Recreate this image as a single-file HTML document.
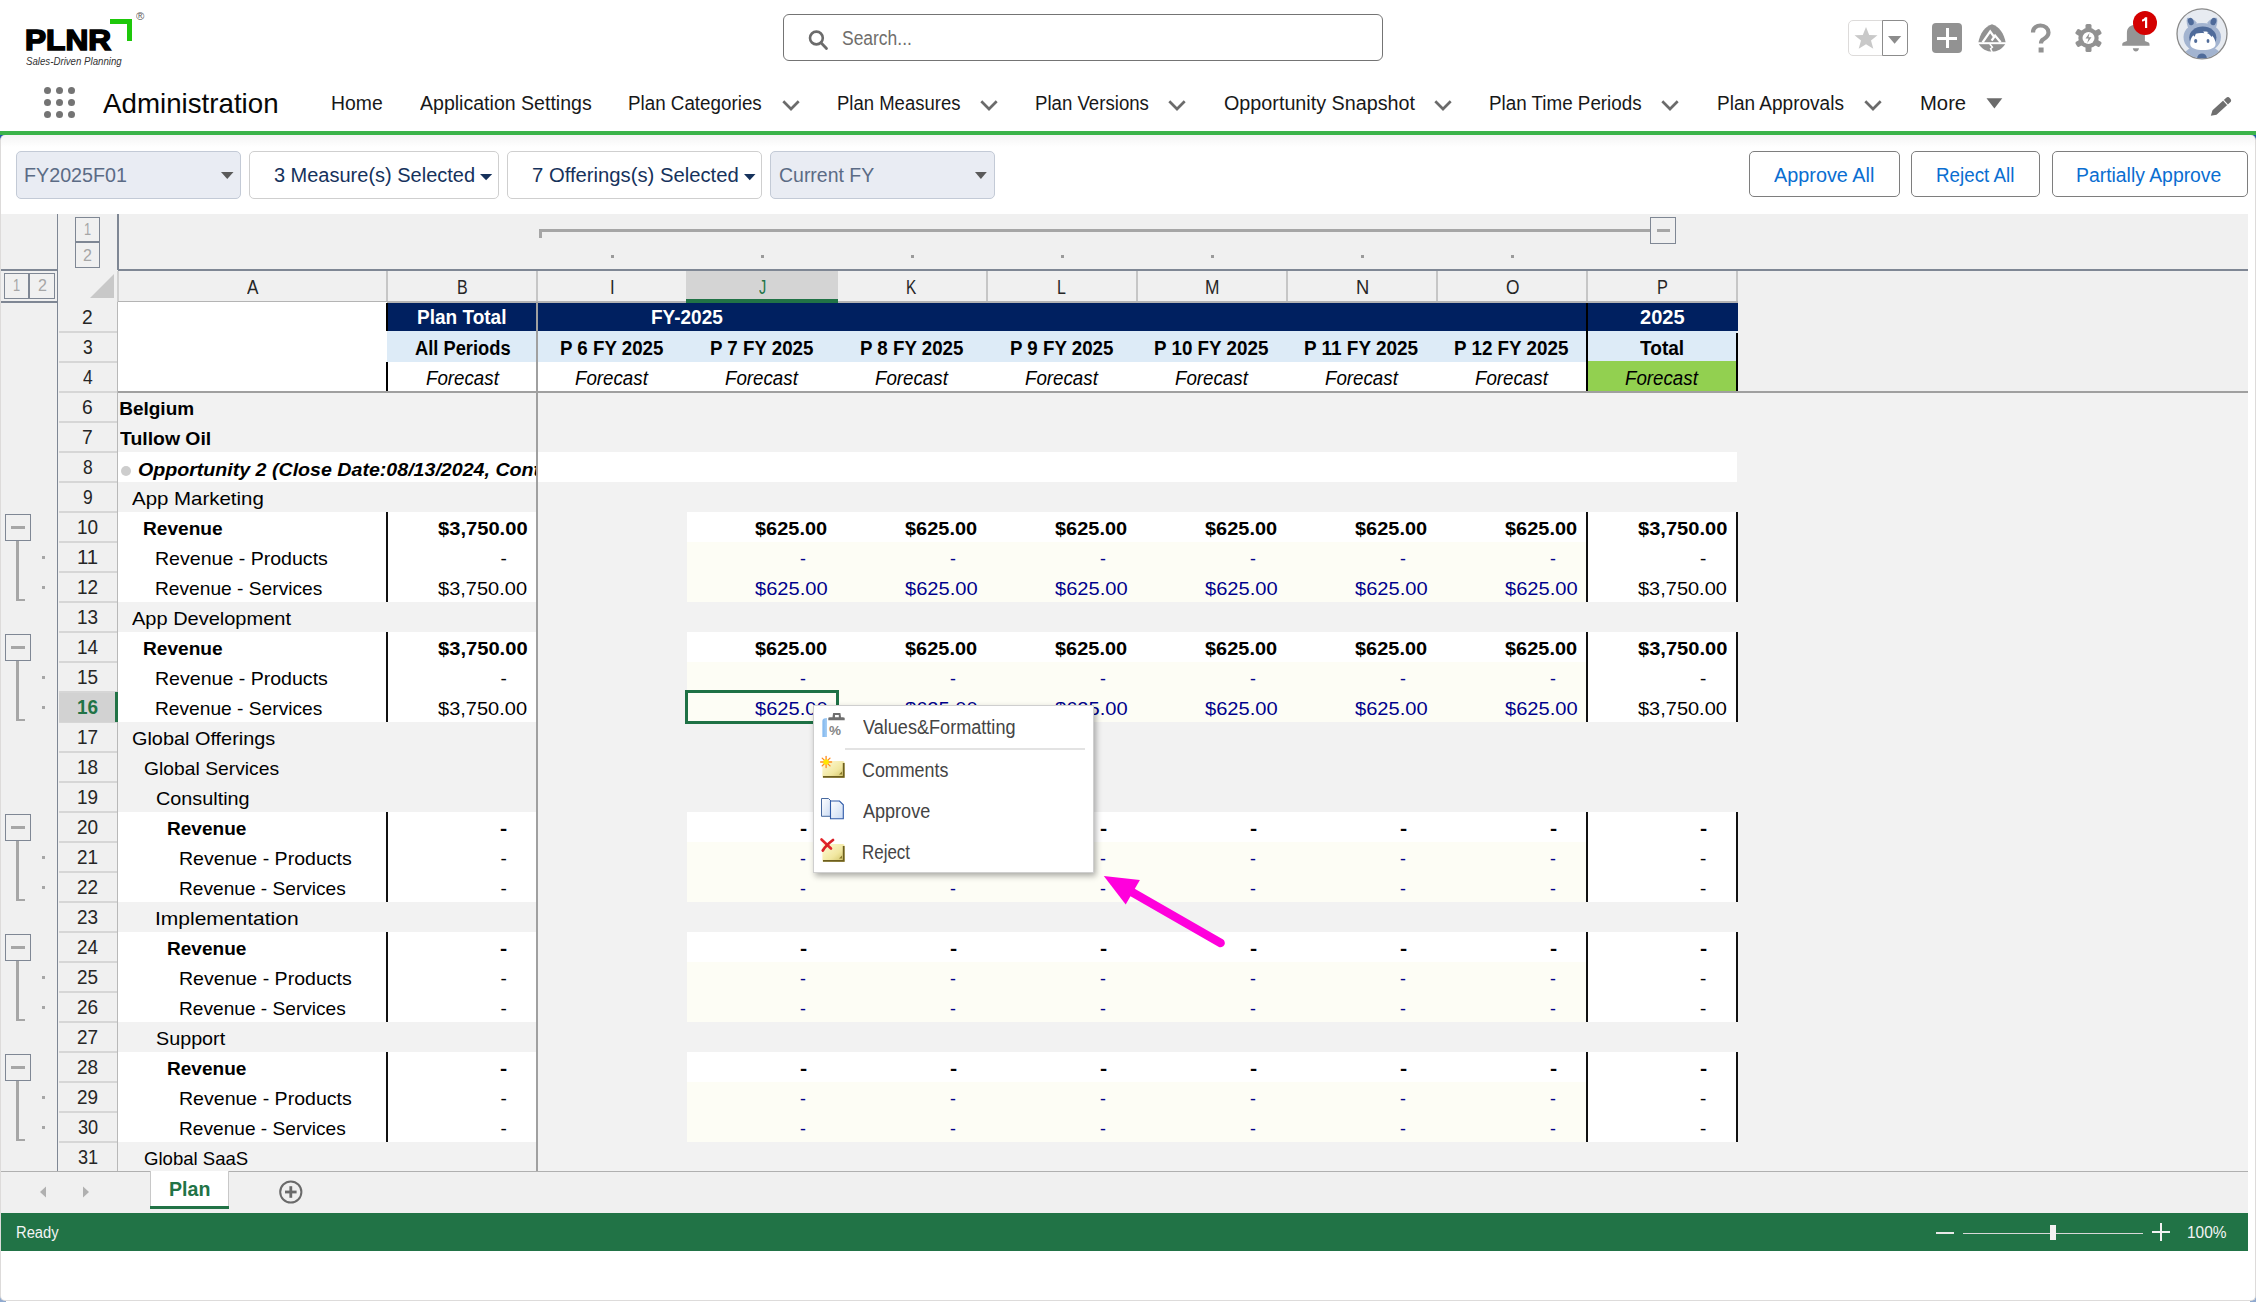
<!DOCTYPE html>
<html><head><meta charset="utf-8"><title>PLNR Administration</title>
<style>
html,body{margin:0;padding:0;width:2256px;height:1302px;overflow:hidden;background:#fff;font-family:"Liberation Sans",sans-serif;}
.t{position:absolute;white-space:nowrap;line-height:1;transform-origin:0 0;}
.r{position:absolute;}
svg{position:absolute;overflow:visible;}
</style></head><body>
<div class="t" style="left:24.69px;top:23px;font:normal 700 30px 'Liberation Sans', sans-serif;color:#000;transform:scaleX(1.0550);-webkit-text-stroke:1.6px #000;">PLNR</div>
<div class="r" style="left:110px;top:19px;width:22px;height:5px;background:#1ec80a;"></div>
<div class="r" style="left:127px;top:19px;width:5px;height:22px;background:#1ec80a;"></div>
<div class="t" style="left:135.90px;top:10px;font:normal 400 11px 'Liberation Sans', sans-serif;color:#5a5a5a;transform:scaleX(1.0250);">®</div>
<div class="t" style="left:26.00px;top:55px;font:italic 400 11px 'Liberation Sans', sans-serif;color:#333;transform:scaleX(0.8795);">Sales-Driven Planning</div>
<div class="r" style="left:783px;top:14px;width:598px;height:45px;border:1.4px solid #747474;border-radius:6px;background:#fff"></div>
<svg style="left:800px;top:22px" width="36" height="36"><circle cx="16.4" cy="16" r="6.4" fill="none" stroke="#6b6b6b" stroke-width="2.6"/><line x1="21" y1="20.8" x2="26.5" y2="26.5" stroke="#6b6b6b" stroke-width="2.8" stroke-linecap="round"/></svg>
<div class="t" style="left:841.50px;top:27px;font:normal 400 20px 'Liberation Sans', sans-serif;color:#706e6b;transform:scaleX(0.8728);">Search...</div>
<div class="r" style="left:1848px;top:20px;width:58px;height:34px;border:1px solid #dddbda;border-radius:5px;background:#fff"></div>
<div class="r" style="left:1882px;top:20px;width:24px;height:34px;border:1px solid #8c8c8c;border-left:1.5px solid #8c8c8c;border-radius:0 5px 5px 0;background:#fff"></div>
<svg style="left:1853px;top:26px" width="26" height="24"><polygon points="13,1 16.2,9 24.5,9.3 18,14.6 20.3,22.8 13,18.2 5.7,22.8 8,14.6 1.5,9.3 9.8,9" fill="#c9c9c9"/></svg>
<svg style="left:1888px;top:35px" width="15" height="10"><polygon points="0,1 13.2,1 6.6,8.8" fill="#8c8c8c"/></svg>
<div class="r" style="left:1932px;top:23px;width:30px;height:30px;border-radius:4px;background:#929292"></div>
<div class="r" style="left:1937px;top:36.5px;width:20px;height:3.0px;background:#fff;"></div>
<div class="r" style="left:1945.5px;top:28px;width:3.0px;height:20px;background:#fff;"></div>
<svg style="left:1977px;top:23px" width="30" height="30"><path d="M15 1.2 C 8 3.5, 3 10, 1.2 20 C 4.5 26.5, 10 28.6, 15 28.6 C 20 28.6, 25.5 26.5, 28.8 20 C 27 10, 22 3.5, 15 1.2 Z" fill="#929292"/><polyline points="5.6,19.3 13.2,8.4 17.6,14.6" fill="none" stroke="#fff" stroke-width="2.3" stroke-linejoin="miter"/><polyline points="14.6,17.6 18.1,12.6 23.6,19.3" fill="none" stroke="#fff" stroke-width="2.3"/><rect x="0" y="19.2" width="30" height="2" fill="#fff"/><path d="M12.8 21 L15.4 24.2 L13.6 25.8 L15.2 29" stroke="#fff" stroke-width="1.5" fill="none"/></svg>
<svg style="left:2028.5px;top:24px" width="24" height="30"><path d="M4 8.5 C 4 3.5, 8 1.5, 11.5 1.5 C 16 1.5, 19.5 4.5, 19.5 8.5 C 19.5 12.5, 16.5 14, 14 15.5 C 12.5 16.5, 12 17.5, 12 19.5" fill="none" stroke="#929292" stroke-width="4.2"/><rect x="9.6" y="23.5" width="5" height="5" fill="#929292"/></svg>
<svg style="left:2074px;top:23px" width="30" height="30"><g fill="#929292" transform="translate(14.5,15)"><rect x="-3" y="-14" width="6" height="6" rx="1.5" transform="rotate(0)"/><rect x="-3" y="-14" width="6" height="6" rx="1.5" transform="rotate(60)"/><rect x="-3" y="-14" width="6" height="6" rx="1.5" transform="rotate(120)"/><rect x="-3" y="-14" width="6" height="6" rx="1.5" transform="rotate(180)"/><rect x="-3" y="-14" width="6" height="6" rx="1.5" transform="rotate(240)"/><rect x="-3" y="-14" width="6" height="6" rx="1.5" transform="rotate(300)"/><circle r="10.2"/></g><circle cx="14.5" cy="15" r="6" fill="#fff"/><path d="M15.5 10 L11.5 15.6 L14.5 15.6 L13.2 20 L17.5 14.2 L14.5 14.2 Z" fill="#929292"/></svg>
<svg style="left:2120px;top:23px" width="34" height="32"><path d="M6.9 17.9 L6.9 10 C 6.9 4.5, 10.5 1.8, 15.9 1.8 C 21.3 1.8, 24.9 4.5, 24.9 10 L24.9 17.9 C 26 18.3, 27.6 18.8, 28.6 19.4 C 29.5 20, 29.6 21, 29.6 22.8 L2.2 22.8 C 2.2 21, 2.3 20, 3.2 19.4 C 4.2 18.8, 5.8 18.3, 6.9 17.9 Z" fill="#949494"/><path d="M12.8 25.2 L19 25.2 C 18.6 27.4, 17.4 28.5, 15.9 28.5 C 14.4 28.5, 13.2 27.4, 12.8 25.2 Z" fill="#949494"/></svg>
<svg style="left:2120px;top:0px" width="40" height="40"><circle cx="25" cy="23" r="12" fill="#d40000"/><path d="M25 17.2 L27.2 17.2 L27.2 28 L25 28 L25 20.4 C 24.2 20.9, 23 21.3, 22 21.4 L22 19.4 C 23.4 19.1, 24.4 18.3, 25 17.2 Z" fill="#fff"/></svg>
<svg style="left:2175px;top:8px" width="54" height="54"><defs><clipPath id="avc"><circle cx="27" cy="25.8" r="24.5"/></clipPath></defs><circle cx="27" cy="25.8" r="25" fill="#e7ebf1" stroke="#8a8a8a" stroke-width="1.3"/><g clip-path="url(#avc)"><path d="M10 44 L20 36 L34 36 L45 44 L45 56 L10 56 Z" fill="#a3b4d0"/><path d="M27 15 C 38 15, 46 21, 46 29 C 46 38, 38 44, 27 44 C 16 44, 8.5 38, 8.5 29 C 8.5 21, 16 15, 27 15 Z" fill="#a3b4d0"/><path d="M12 10 C 15 9, 19 11, 22 15 L14 22 C 12 18, 11 13, 12 10 Z" fill="#a3b4d0"/><path d="M42 10 C 39 9, 35 11, 32 15 L40 22 C 42 18, 43 13, 42 10 Z" fill="#a3b4d0"/><ellipse cx="15.8" cy="13.5" rx="2.8" ry="3.8" transform="rotate(-20 15.8 13.5)" fill="#4f6b9a"/><ellipse cx="38.5" cy="13.5" rx="2.8" ry="3.8" transform="rotate(20 38.5 13.5)" fill="#4f6b9a"/><ellipse cx="27.8" cy="29.6" rx="13.6" ry="11.2" fill="#4f6b9a"/><path d="M15.2 36 C 15 32, 16.3 29.5, 18.3 27.3 L19.6 28.8 L20.8 25.8 C 23 25, 26 24.6, 29.3 25.2 L28.2 23.6 C 30.5 23.2, 32.5 23.6, 33.6 24.2 L31.8 25 C 34 26, 35.8 27.5, 36.6 29.2 L37 27.6 C 38.6 29.2, 39.6 31, 40.2 33 L40.6 36 C 40.6 40, 35 42, 28 42 C 21 42, 15.2 40, 15.2 36 Z" fill="#fff"/><ellipse cx="20.7" cy="33" rx="1.6" ry="2.1" fill="#4f6b9a"/><ellipse cx="33" cy="33" rx="1.4" ry="2" fill="#4f6b9a"/><ellipse cx="27" cy="50" rx="4.8" ry="4.6" fill="#4f6b9a"/></g></svg>
<div class="r" style="left:44.0px;top:87.0px;width:7px;height:7px;border-radius:50%;background:#747474"></div>
<div class="r" style="left:44.0px;top:99.0px;width:7px;height:7px;border-radius:50%;background:#747474"></div>
<div class="r" style="left:44.0px;top:111.0px;width:7px;height:7px;border-radius:50%;background:#747474"></div>
<div class="r" style="left:56.0px;top:87.0px;width:7px;height:7px;border-radius:50%;background:#747474"></div>
<div class="r" style="left:56.0px;top:99.0px;width:7px;height:7px;border-radius:50%;background:#747474"></div>
<div class="r" style="left:56.0px;top:111.0px;width:7px;height:7px;border-radius:50%;background:#747474"></div>
<div class="r" style="left:68.0px;top:87.0px;width:7px;height:7px;border-radius:50%;background:#747474"></div>
<div class="r" style="left:68.0px;top:99.0px;width:7px;height:7px;border-radius:50%;background:#747474"></div>
<div class="r" style="left:68.0px;top:111.0px;width:7px;height:7px;border-radius:50%;background:#747474"></div>
<div class="t" style="left:102.50px;top:88px;font:normal 400 28px 'Liberation Sans', sans-serif;color:#080707;transform:scaleX(0.9896);">Administration</div>
<div class="t" style="left:331.43px;top:92px;font:normal 400 20px 'Liberation Sans', sans-serif;color:#181818;transform:scaleX(0.9689);">Home</div>
<div class="t" style="left:420.00px;top:92px;font:normal 400 20px 'Liberation Sans', sans-serif;color:#181818;transform:scaleX(0.9774);">Application Settings</div>
<div class="t" style="left:627.76px;top:92px;font:normal 400 20px 'Liberation Sans', sans-serif;color:#181818;transform:scaleX(0.9398);">Plan Categories</div>
<div class="t" style="left:836.57px;top:92px;font:normal 400 20px 'Liberation Sans', sans-serif;color:#181818;transform:scaleX(0.9252);">Plan Measures</div>
<div class="t" style="left:1035.07px;top:92px;font:normal 400 20px 'Liberation Sans', sans-serif;color:#181818;transform:scaleX(0.9316);">Plan Versions</div>
<div class="t" style="left:1224.00px;top:92px;font:normal 400 20px 'Liberation Sans', sans-serif;color:#181818;transform:scaleX(0.9876);">Opportunity Snapshot</div>
<div class="t" style="left:1489.06px;top:92px;font:normal 400 20px 'Liberation Sans', sans-serif;color:#181818;transform:scaleX(0.9403);">Plan Time Periods</div>
<div class="t" style="left:1717.05px;top:92px;font:normal 400 20px 'Liberation Sans', sans-serif;color:#181818;transform:scaleX(0.9512);">Plan Approvals</div>
<div class="t" style="left:1919.99px;top:92px;font:normal 400 20px 'Liberation Sans', sans-serif;color:#181818;transform:scaleX(1.0125);">More</div>
<svg style="left:781.6px;top:99px" width="20" height="14"><polyline points="1.3,2.3 9,10 16.7,2.3" fill="none" stroke="#6b6b6b" stroke-width="2.7"/></svg>
<svg style="left:980px;top:99px" width="20" height="14"><polyline points="1.3,2.3 9,10 16.7,2.3" fill="none" stroke="#6b6b6b" stroke-width="2.7"/></svg>
<svg style="left:1168px;top:99px" width="20" height="14"><polyline points="1.3,2.3 9,10 16.7,2.3" fill="none" stroke="#6b6b6b" stroke-width="2.7"/></svg>
<svg style="left:1434px;top:99px" width="20" height="14"><polyline points="1.3,2.3 9,10 16.7,2.3" fill="none" stroke="#6b6b6b" stroke-width="2.7"/></svg>
<svg style="left:1661px;top:99px" width="20" height="14"><polyline points="1.3,2.3 9,10 16.7,2.3" fill="none" stroke="#6b6b6b" stroke-width="2.7"/></svg>
<svg style="left:1864px;top:99px" width="20" height="14"><polyline points="1.3,2.3 9,10 16.7,2.3" fill="none" stroke="#6b6b6b" stroke-width="2.7"/></svg>
<svg style="left:1985px;top:97px" width="20" height="14"><polygon points="1.5,1.3 17.3,1.3 9.4,11.6" fill="#6b6b6b"/></svg>
<svg style="left:2200px;top:88px" width="40" height="34"><g transform="translate(10.8,27.8) rotate(-42)"><path d="M0 0 L5 -3 L23.5 -3 C 25.2 -3, 26 -2, 26 0 C 26 2, 25.2 3, 23.5 3 L5 3 Z" fill="#6f6f6f"/><rect x="19.2" y="-3.2" width="1.1" height="6.4" fill="#fff"/></g></svg>
<div class="r" style="left:0px;top:131px;width:2256px;height:4px;background:#3bb44a;"></div>
<div class="r" style="left:0px;top:135px;width:6px;height:6px;background:#1f5aa6;"></div>
<div class="r" style="left:2250px;top:135px;width:6px;height:6px;background:#1f5aa6;"></div>
<div class="r" style="left:0px;top:1296px;width:6px;height:6px;background:#8fa9cf;"></div>
<div class="r" style="left:2250px;top:1296px;width:6px;height:6px;background:#8fa9cf;"></div>
<div class="r" style="left:0px;top:135px;width:2254px;height:1165px;border:1px solid #dddbda;border-top:none;border-radius:5px 5px 5px 5px;background:linear-gradient(#f4f4f4, #fff 12px)"></div>
<div class="r" style="left:16px;top:151px;width:223px;height:46px;border:1.2px solid #c3cad6;border-radius:5px;background:#e9ecf3"></div>
<div class="t" style="left:23.91px;top:164px;font:normal 400 20px 'Liberation Sans', sans-serif;color:#5b6b85;transform:scaleX(0.9856);">FY2025F01</div>
<svg style="left:220.8px;top:171.6px" width="12.5" height="6.900000000000006"><polygon points="0,0 12.5,0 6.25,6.900000000000006" fill="#5a5a5a"/></svg>
<div class="r" style="left:249px;top:151px;width:248px;height:45.5px;border:1.2px solid #cfcfcf;border-radius:5px;background:#fff"></div>
<div class="t" style="left:273.90px;top:164px;font:normal 400 20px 'Liberation Sans', sans-serif;color:#16325c;">3 Measure(s) Selected</div>
<svg style="left:479.5px;top:174px" width="12.199999999999989" height="6.300000000000011"><polygon points="0,0 12.199999999999989,0 6.099999999999994,6.300000000000011" fill="#16325c"/></svg>
<div class="r" style="left:507px;top:151px;width:253px;height:45.5px;border:1.2px solid #cfcfcf;border-radius:5px;background:#fff"></div>
<div class="t" style="left:531.79px;top:164px;font:normal 400 20px 'Liberation Sans', sans-serif;color:#16325c;transform:scaleX(1.0126);">7 Offerings(s) Selected</div>
<svg style="left:744px;top:174px" width="11.5" height="6.300000000000011"><polygon points="0,0 11.5,0 5.75,6.300000000000011" fill="#16325c"/></svg>
<div class="r" style="left:770px;top:151px;width:223px;height:46px;border:1.2px solid #c3cad6;border-radius:5px;background:#e9ecf3"></div>
<div class="t" style="left:778.63px;top:164px;font:normal 400 20px 'Liberation Sans', sans-serif;color:#5b6b85;transform:scaleX(0.9734);">Current FY</div>
<svg style="left:974.7px;top:171.5px" width="11.799999999999955" height="6.900000000000006"><polygon points="0,0 11.799999999999955,0 5.899999999999977,6.900000000000006" fill="#5a5a5a"/></svg>
<div class="r" style="left:1749px;top:151px;width:149px;height:44px;border:1.3px solid #7e7e7e;border-radius:5px;background:#fff"></div>
<div class="t" style="left:1774.00px;top:164px;font:normal 400 20px 'Liberation Sans', sans-serif;color:#0a6ed1;transform:scaleX(0.9918);">Approve All</div>
<div class="r" style="left:1911px;top:151px;width:127px;height:44px;border:1.3px solid #7e7e7e;border-radius:5px;background:#fff"></div>
<div class="t" style="left:1936.06px;top:164px;font:normal 400 20px 'Liberation Sans', sans-serif;color:#0a6ed1;transform:scaleX(0.9394);">Reject All</div>
<div class="r" style="left:2052px;top:151px;width:194px;height:44px;border:1.3px solid #7e7e7e;border-radius:5px;background:#fff"></div>
<div class="t" style="left:2076.43px;top:164px;font:normal 400 20px 'Liberation Sans', sans-serif;color:#0a6ed1;transform:scaleX(0.9683);">Partially Approve</div>
<div class="r" style="left:1px;top:214px;width:2247px;height:958px;background:#f0f0f0;"></div>
<div class="r" style="left:118px;top:392px;width:2130px;height:780px;background:#f2f2f2;"></div>
<div class="r" style="left:56.8px;top:214px;width:1.5px;height:958px;background:#7f8794;"></div>
<div class="r" style="left:116.5px;top:214px;width:2.0px;height:56px;background:#7f8794;"></div>
<div class="r" style="left:1px;top:269px;width:56px;height:2px;background:#7f8794;"></div>
<div class="r" style="left:118px;top:269px;width:2130px;height:2px;background:#7f8794;"></div>
<div class="r" style="left:1px;top:300.5px;width:56px;height:2.0px;background:#7f8794;"></div>
<div class="r" style="left:75px;top:217px;width:25px;height:25px;border:1.6px solid #7f8794;box-sizing:border-box"></div>
<div class="r" style="left:75px;top:242px;width:25px;height:26px;border:1.6px solid #7f8794;box-sizing:border-box"></div>
<div class="t" style="left:83.55px;top:220px;font:normal 400 17px 'Liberation Sans', sans-serif;color:#a6a6a6;transform:scaleX(0.7500);">1</div>
<div class="t" style="left:83.05px;top:246px;font:normal 400 17px 'Liberation Sans', sans-serif;color:#a6a6a6;transform:scaleX(0.9444);">2</div>
<div class="r" style="left:4px;top:273px;width:25px;height:26px;border:1.6px solid #7f8794;box-sizing:border-box"></div>
<div class="r" style="left:29px;top:273px;width:26px;height:26px;border:1.6px solid #7f8794;box-sizing:border-box"></div>
<div class="t" style="left:12.55px;top:276px;font:normal 400 17px 'Liberation Sans', sans-serif;color:#a6a6a6;transform:scaleX(0.7500);">1</div>
<div class="t" style="left:37.95px;top:276px;font:normal 400 17px 'Liberation Sans', sans-serif;color:#a6a6a6;transform:scaleX(0.9444);">2</div>
<div class="r" style="left:539px;top:229px;width:1111px;height:3px;background:#a6a6a6;"></div>
<div class="r" style="left:539px;top:229px;width:3px;height:9px;background:#a6a6a6;"></div>
<div class="r" style="left:1650px;top:217px;width:26px;height:27px;border:1.6px solid #7f8794;box-sizing:border-box"></div>
<div class="r" style="left:1656.5px;top:229.3px;width:13.0px;height:2.3999999999999773px;background:#a6a6a6;"></div>
<div class="r" style="left:610.5px;top:254.5px;width:3.0px;height:3.0px;background:#9a9a9a;"></div>
<div class="r" style="left:760.5px;top:254.5px;width:3.0px;height:3.0px;background:#9a9a9a;"></div>
<div class="r" style="left:910.5px;top:254.5px;width:3.0px;height:3.0px;background:#9a9a9a;"></div>
<div class="r" style="left:1060.5px;top:254.5px;width:3.0px;height:3.0px;background:#9a9a9a;"></div>
<div class="r" style="left:1210.5px;top:254.5px;width:3.0px;height:3.0px;background:#9a9a9a;"></div>
<div class="r" style="left:1360.5px;top:254.5px;width:3.0px;height:3.0px;background:#9a9a9a;"></div>
<div class="r" style="left:1510.5px;top:254.5px;width:3.0px;height:3.0px;background:#9a9a9a;"></div>
<svg style="left:59px;top:271px" width="58" height="30"><polygon points="55,3 55,27 31,27" fill="#c8c8c8"/></svg>
<div class="r" style="left:117px;top:271px;width:2px;height:31px;background:#d0d0d0;"></div>
<div class="r" style="left:386px;top:271px;width:2px;height:30px;background:#c6c6c6;"></div>
<div class="r" style="left:536px;top:271px;width:2px;height:30px;background:#c6c6c6;"></div>
<div class="r" style="left:686px;top:271px;width:2px;height:30px;background:#c6c6c6;"></div>
<div class="r" style="left:836px;top:271px;width:2px;height:30px;background:#c6c6c6;"></div>
<div class="r" style="left:986px;top:271px;width:2px;height:30px;background:#c6c6c6;"></div>
<div class="r" style="left:1136px;top:271px;width:2px;height:30px;background:#c6c6c6;"></div>
<div class="r" style="left:1286px;top:271px;width:2px;height:30px;background:#c6c6c6;"></div>
<div class="r" style="left:1436px;top:271px;width:2px;height:30px;background:#c6c6c6;"></div>
<div class="r" style="left:1586px;top:271px;width:2px;height:30px;background:#c6c6c6;"></div>
<div class="r" style="left:1736px;top:271px;width:2px;height:30px;background:#c6c6c6;"></div>
<div class="r" style="left:686px;top:271px;width:152px;height:30px;background:#d4d4d4;"></div>
<div class="t" style="left:246.50px;top:276px;font:normal 400 20px 'Liberation Sans', sans-serif;color:#262626;transform:scaleX(0.8571);">A</div>
<div class="t" style="left:457.10px;top:276px;font:normal 400 20px 'Liberation Sans', sans-serif;color:#262626;transform:scaleX(0.8000);">B</div>
<div class="t" style="left:610.22px;top:276px;font:normal 400 20px 'Liberation Sans', sans-serif;color:#262626;transform:scaleX(0.8333);">I</div>
<div class="t" style="left:758.75px;top:276px;font:normal 400 20px 'Liberation Sans', sans-serif;color:#217346;transform:scaleX(0.7222);">J</div>
<div class="t" style="left:906.23px;top:276px;font:normal 400 20px 'Liberation Sans', sans-serif;color:#262626;transform:scaleX(0.7692);">K</div>
<div class="t" style="left:1057.20px;top:276px;font:normal 400 20px 'Liberation Sans', sans-serif;color:#262626;transform:scaleX(0.8000);">L</div>
<div class="t" style="left:1204.63px;top:276px;font:normal 400 20px 'Liberation Sans', sans-serif;color:#262626;transform:scaleX(0.8667);">M</div>
<div class="t" style="left:1355.58px;top:276px;font:normal 400 20px 'Liberation Sans', sans-serif;color:#262626;transform:scaleX(0.9167);">N</div>
<div class="t" style="left:1505.50px;top:276px;font:normal 400 20px 'Liberation Sans', sans-serif;color:#262626;transform:scaleX(0.8667);">O</div>
<div class="t" style="left:1656.68px;top:276px;font:normal 400 20px 'Liberation Sans', sans-serif;color:#262626;transform:scaleX(0.8167);">P</div>
<div class="r" style="left:118px;top:301px;width:1620px;height:2px;background:#b4b4b4;"></div>
<div class="r" style="left:686px;top:299px;width:152px;height:3.8000000000000114px;background:#217346;"></div>
<div class="r" style="left:59px;top:302px;width:58px;height:870px;background:#f0f0f0;"></div>
<div class="r" style="left:59px;top:331px;width:58px;height:2px;background:#d6d6d6;"></div>
<div class="r" style="left:59px;top:361px;width:58px;height:2px;background:#d6d6d6;"></div>
<div class="r" style="left:59px;top:391px;width:58px;height:2px;background:#d6d6d6;"></div>
<div class="r" style="left:59px;top:421px;width:58px;height:2px;background:#d6d6d6;"></div>
<div class="r" style="left:59px;top:451px;width:58px;height:2px;background:#d6d6d6;"></div>
<div class="r" style="left:59px;top:481px;width:58px;height:2px;background:#d6d6d6;"></div>
<div class="r" style="left:59px;top:511px;width:58px;height:2px;background:#d6d6d6;"></div>
<div class="r" style="left:59px;top:541px;width:58px;height:2px;background:#d6d6d6;"></div>
<div class="r" style="left:59px;top:571px;width:58px;height:2px;background:#d6d6d6;"></div>
<div class="r" style="left:59px;top:601px;width:58px;height:2px;background:#d6d6d6;"></div>
<div class="r" style="left:59px;top:631px;width:58px;height:2px;background:#d6d6d6;"></div>
<div class="r" style="left:59px;top:661px;width:58px;height:2px;background:#d6d6d6;"></div>
<div class="r" style="left:59px;top:691px;width:58px;height:2px;background:#d6d6d6;"></div>
<div class="r" style="left:59px;top:721px;width:58px;height:2px;background:#d6d6d6;"></div>
<div class="r" style="left:59px;top:751px;width:58px;height:2px;background:#d6d6d6;"></div>
<div class="r" style="left:59px;top:781px;width:58px;height:2px;background:#d6d6d6;"></div>
<div class="r" style="left:59px;top:811px;width:58px;height:2px;background:#d6d6d6;"></div>
<div class="r" style="left:59px;top:841px;width:58px;height:2px;background:#d6d6d6;"></div>
<div class="r" style="left:59px;top:871px;width:58px;height:2px;background:#d6d6d6;"></div>
<div class="r" style="left:59px;top:901px;width:58px;height:2px;background:#d6d6d6;"></div>
<div class="r" style="left:59px;top:931px;width:58px;height:2px;background:#d6d6d6;"></div>
<div class="r" style="left:59px;top:961px;width:58px;height:2px;background:#d6d6d6;"></div>
<div class="r" style="left:59px;top:991px;width:58px;height:2px;background:#d6d6d6;"></div>
<div class="r" style="left:59px;top:1021px;width:58px;height:2px;background:#d6d6d6;"></div>
<div class="r" style="left:59px;top:1051px;width:58px;height:2px;background:#d6d6d6;"></div>
<div class="r" style="left:59px;top:1081px;width:58px;height:2px;background:#d6d6d6;"></div>
<div class="r" style="left:59px;top:1111px;width:58px;height:2px;background:#d6d6d6;"></div>
<div class="r" style="left:59px;top:1141px;width:58px;height:2px;background:#d6d6d6;"></div>
<div class="r" style="left:59px;top:1171px;width:58px;height:2px;background:#d6d6d6;"></div>
<div class="r" style="left:117px;top:302px;width:1px;height:870px;background:#b8b8b8;"></div>
<div class="r" style="left:59px;top:693px;width:58px;height:29px;background:#d2d2d2;"></div>
<div class="r" style="left:114.5px;top:692px;width:3.0px;height:30px;background:#217346;"></div>
<div class="t" style="left:81.94px;top:306px;font:normal 400 20px 'Liberation Sans', sans-serif;color:#262626;transform:scaleX(0.9600);">2</div>
<div class="t" style="left:82.90px;top:336px;font:normal 400 20px 'Liberation Sans', sans-serif;color:#262626;transform:scaleX(0.8727);">3</div>
<div class="t" style="left:82.90px;top:366px;font:normal 400 20px 'Liberation Sans', sans-serif;color:#262626;transform:scaleX(0.8727);">4</div>
<div class="t" style="left:81.94px;top:396px;font:normal 400 20px 'Liberation Sans', sans-serif;color:#262626;transform:scaleX(0.9600);">6</div>
<div class="t" style="left:81.94px;top:426px;font:normal 400 20px 'Liberation Sans', sans-serif;color:#262626;transform:scaleX(0.9600);">7</div>
<div class="t" style="left:82.90px;top:456px;font:normal 400 20px 'Liberation Sans', sans-serif;color:#262626;transform:scaleX(0.8727);">8</div>
<div class="t" style="left:82.90px;top:486px;font:normal 400 20px 'Liberation Sans', sans-serif;color:#262626;transform:scaleX(0.8727);">9</div>
<div class="t" style="left:76.75px;top:516px;font:normal 400 20px 'Liberation Sans', sans-serif;color:#262626;transform:scaleX(0.9468);">10</div>
<div class="t" style="left:76.68px;top:546px;font:normal 400 20px 'Liberation Sans', sans-serif;color:#262626;transform:scaleX(1.0184);">11</div>
<div class="t" style="left:76.75px;top:576px;font:normal 400 20px 'Liberation Sans', sans-serif;color:#262626;transform:scaleX(0.9468);">12</div>
<div class="t" style="left:76.75px;top:606px;font:normal 400 20px 'Liberation Sans', sans-serif;color:#262626;transform:scaleX(0.9468);">13</div>
<div class="t" style="left:76.75px;top:636px;font:normal 400 20px 'Liberation Sans', sans-serif;color:#262626;transform:scaleX(0.9468);">14</div>
<div class="t" style="left:76.75px;top:666px;font:normal 400 20px 'Liberation Sans', sans-serif;color:#262626;transform:scaleX(0.9468);">15</div>
<div class="t" style="left:76.75px;top:696px;font:normal 700 20px 'Liberation Sans', sans-serif;color:#217346;transform:scaleX(0.9468);">16</div>
<div class="t" style="left:76.75px;top:726px;font:normal 400 20px 'Liberation Sans', sans-serif;color:#262626;transform:scaleX(0.9468);">17</div>
<div class="t" style="left:76.75px;top:756px;font:normal 400 20px 'Liberation Sans', sans-serif;color:#262626;transform:scaleX(0.9468);">18</div>
<div class="t" style="left:76.75px;top:786px;font:normal 400 20px 'Liberation Sans', sans-serif;color:#262626;transform:scaleX(0.9468);">19</div>
<div class="t" style="left:76.75px;top:816px;font:normal 400 20px 'Liberation Sans', sans-serif;color:#262626;transform:scaleX(0.9468);">20</div>
<div class="t" style="left:76.75px;top:846px;font:normal 400 20px 'Liberation Sans', sans-serif;color:#262626;transform:scaleX(0.9468);">21</div>
<div class="t" style="left:76.75px;top:876px;font:normal 400 20px 'Liberation Sans', sans-serif;color:#262626;transform:scaleX(0.9468);">22</div>
<div class="t" style="left:76.75px;top:906px;font:normal 400 20px 'Liberation Sans', sans-serif;color:#262626;transform:scaleX(0.9468);">23</div>
<div class="t" style="left:76.75px;top:936px;font:normal 400 20px 'Liberation Sans', sans-serif;color:#262626;transform:scaleX(0.9468);">24</div>
<div class="t" style="left:76.75px;top:966px;font:normal 400 20px 'Liberation Sans', sans-serif;color:#262626;transform:scaleX(0.9468);">25</div>
<div class="t" style="left:76.75px;top:996px;font:normal 400 20px 'Liberation Sans', sans-serif;color:#262626;transform:scaleX(0.9468);">26</div>
<div class="t" style="left:76.75px;top:1026px;font:normal 400 20px 'Liberation Sans', sans-serif;color:#262626;transform:scaleX(0.9468);">27</div>
<div class="t" style="left:76.75px;top:1056px;font:normal 400 20px 'Liberation Sans', sans-serif;color:#262626;transform:scaleX(0.9468);">28</div>
<div class="t" style="left:76.75px;top:1086px;font:normal 400 20px 'Liberation Sans', sans-serif;color:#262626;transform:scaleX(0.9468);">29</div>
<div class="t" style="left:77.70px;top:1116px;font:normal 400 20px 'Liberation Sans', sans-serif;color:#262626;transform:scaleX(0.9040);">30</div>
<div class="t" style="left:77.70px;top:1146px;font:normal 400 20px 'Liberation Sans', sans-serif;color:#262626;transform:scaleX(0.9040);">31</div>
<div class="r" style="left:387px;top:303px;width:1351px;height:28px;background:#002060;"></div>
<div class="r" style="left:387px;top:331px;width:1200px;height:31px;background:#ddebf7;"></div>
<div class="r" style="left:1587px;top:331px;width:150px;height:30px;background:#ddebf7;"></div>
<div class="r" style="left:118px;top:302px;width:269px;height:90px;background:#fff;"></div>
<div class="r" style="left:387px;top:362px;width:1200px;height:30px;background:#fff;"></div>
<div class="r" style="left:1587px;top:361px;width:150px;height:31px;background:#92d050;"></div>
<div class="r" style="left:386.4px;top:303px;width:1.6000000000000227px;height:28px;background:#000;"></div>
<div class="r" style="left:386.4px;top:362px;width:1.6000000000000227px;height:29px;background:#000;"></div>
<div class="r" style="left:1586.4px;top:303px;width:1.599999999999909px;height:88px;background:#000;"></div>
<div class="r" style="left:1736.4px;top:333px;width:1.599999999999909px;height:58px;background:#000;"></div>
<div class="t" style="left:417.05px;top:306px;font:normal 700 20px 'Liberation Sans', sans-serif;color:#fff;transform:scaleX(0.9511);">Plan Total</div>
<div class="t" style="left:650.85px;top:306px;font:normal 700 20px 'Liberation Sans', sans-serif;color:#fff;transform:scaleX(0.9492);">FY-2025</div>
<div class="t" style="left:1640.00px;top:306px;font:normal 700 20px 'Liberation Sans', sans-serif;color:#fff;transform:scaleX(1.0029);">2025</div>
<div class="t" style="left:414.50px;top:337px;font:normal 700 20px 'Liberation Sans', sans-serif;color:#000;transform:scaleX(0.9152);">All Periods</div>
<div class="t" style="left:559.56px;top:337px;font:normal 700 20px 'Liberation Sans', sans-serif;color:#000;transform:scaleX(0.9359);">P 6 FY 2025</div>
<div class="t" style="left:709.56px;top:337px;font:normal 700 20px 'Liberation Sans', sans-serif;color:#000;transform:scaleX(0.9359);">P 7 FY 2025</div>
<div class="t" style="left:859.56px;top:337px;font:normal 700 20px 'Liberation Sans', sans-serif;color:#000;transform:scaleX(0.9359);">P 8 FY 2025</div>
<div class="t" style="left:1009.56px;top:337px;font:normal 700 20px 'Liberation Sans', sans-serif;color:#000;transform:scaleX(0.9359);">P 9 FY 2025</div>
<div class="t" style="left:1154.06px;top:337px;font:normal 700 20px 'Liberation Sans', sans-serif;color:#000;transform:scaleX(0.9407);">P 10 FY 2025</div>
<div class="t" style="left:1304.20px;top:337px;font:normal 700 20px 'Liberation Sans', sans-serif;color:#000;transform:scaleX(0.9469);">P 11 FY 2025</div>
<div class="t" style="left:1454.06px;top:337px;font:normal 700 20px 'Liberation Sans', sans-serif;color:#000;transform:scaleX(0.9407);">P 12 FY 2025</div>
<div class="t" style="left:1640.00px;top:337px;font:normal 700 20px 'Liberation Sans', sans-serif;color:#000;transform:scaleX(0.9534);">Total</div>
<div class="t" style="left:425.70px;top:367px;font:italic 400 20px 'Liberation Sans', sans-serif;color:#000;transform:scaleX(0.9363);">Forecast</div>
<div class="t" style="left:575.40px;top:367px;font:italic 400 20px 'Liberation Sans', sans-serif;color:#000;transform:scaleX(0.9363);">Forecast</div>
<div class="t" style="left:725.40px;top:367px;font:italic 400 20px 'Liberation Sans', sans-serif;color:#000;transform:scaleX(0.9363);">Forecast</div>
<div class="t" style="left:875.40px;top:367px;font:italic 400 20px 'Liberation Sans', sans-serif;color:#000;transform:scaleX(0.9363);">Forecast</div>
<div class="t" style="left:1025.40px;top:367px;font:italic 400 20px 'Liberation Sans', sans-serif;color:#000;transform:scaleX(0.9363);">Forecast</div>
<div class="t" style="left:1175.40px;top:367px;font:italic 400 20px 'Liberation Sans', sans-serif;color:#000;transform:scaleX(0.9363);">Forecast</div>
<div class="t" style="left:1325.40px;top:367px;font:italic 400 20px 'Liberation Sans', sans-serif;color:#000;transform:scaleX(0.9363);">Forecast</div>
<div class="t" style="left:1475.40px;top:367px;font:italic 400 20px 'Liberation Sans', sans-serif;color:#000;transform:scaleX(0.9363);">Forecast</div>
<div class="t" style="left:1625.40px;top:367px;font:italic 400 20px 'Liberation Sans', sans-serif;color:#000;transform:scaleX(0.9363);">Forecast</div>
<div class="r" style="left:118px;top:512px;width:419px;height:30px;background:#fff;"></div>
<div class="r" style="left:687px;top:512px;width:900px;height:30px;background:#fff;"></div>
<div class="r" style="left:1587px;top:512px;width:150px;height:30px;background:#fff;"></div>
<div class="r" style="left:386.4px;top:512px;width:1.6000000000000227px;height:30px;background:#111;"></div>
<div class="r" style="left:1586.4px;top:512px;width:1.599999999999909px;height:30px;background:#111;"></div>
<div class="r" style="left:1736.4px;top:512px;width:1.599999999999909px;height:30px;background:#111;"></div>
<div class="r" style="left:118px;top:632px;width:419px;height:30px;background:#fff;"></div>
<div class="r" style="left:687px;top:632px;width:900px;height:30px;background:#fff;"></div>
<div class="r" style="left:1587px;top:632px;width:150px;height:30px;background:#fff;"></div>
<div class="r" style="left:386.4px;top:632px;width:1.6000000000000227px;height:30px;background:#111;"></div>
<div class="r" style="left:1586.4px;top:632px;width:1.599999999999909px;height:30px;background:#111;"></div>
<div class="r" style="left:1736.4px;top:632px;width:1.599999999999909px;height:30px;background:#111;"></div>
<div class="r" style="left:118px;top:812px;width:419px;height:30px;background:#fff;"></div>
<div class="r" style="left:687px;top:812px;width:900px;height:30px;background:#fff;"></div>
<div class="r" style="left:1587px;top:812px;width:150px;height:30px;background:#fff;"></div>
<div class="r" style="left:386.4px;top:812px;width:1.6000000000000227px;height:30px;background:#111;"></div>
<div class="r" style="left:1586.4px;top:812px;width:1.599999999999909px;height:30px;background:#111;"></div>
<div class="r" style="left:1736.4px;top:812px;width:1.599999999999909px;height:30px;background:#111;"></div>
<div class="r" style="left:118px;top:932px;width:419px;height:30px;background:#fff;"></div>
<div class="r" style="left:687px;top:932px;width:900px;height:30px;background:#fff;"></div>
<div class="r" style="left:1587px;top:932px;width:150px;height:30px;background:#fff;"></div>
<div class="r" style="left:386.4px;top:932px;width:1.6000000000000227px;height:30px;background:#111;"></div>
<div class="r" style="left:1586.4px;top:932px;width:1.599999999999909px;height:30px;background:#111;"></div>
<div class="r" style="left:1736.4px;top:932px;width:1.599999999999909px;height:30px;background:#111;"></div>
<div class="r" style="left:118px;top:1052px;width:419px;height:30px;background:#fff;"></div>
<div class="r" style="left:687px;top:1052px;width:900px;height:30px;background:#fff;"></div>
<div class="r" style="left:1587px;top:1052px;width:150px;height:30px;background:#fff;"></div>
<div class="r" style="left:386.4px;top:1052px;width:1.6000000000000227px;height:30px;background:#111;"></div>
<div class="r" style="left:1586.4px;top:1052px;width:1.599999999999909px;height:30px;background:#111;"></div>
<div class="r" style="left:1736.4px;top:1052px;width:1.599999999999909px;height:30px;background:#111;"></div>
<div class="r" style="left:118px;top:542px;width:419px;height:30px;background:#fff;"></div>
<div class="r" style="left:687px;top:542px;width:900px;height:30px;background:#fdfdf5;"></div>
<div class="r" style="left:1587px;top:542px;width:150px;height:30px;background:#fff;"></div>
<div class="r" style="left:386.4px;top:542px;width:1.6000000000000227px;height:30px;background:#111;"></div>
<div class="r" style="left:1586.4px;top:542px;width:1.599999999999909px;height:30px;background:#111;"></div>
<div class="r" style="left:1736.4px;top:542px;width:1.599999999999909px;height:30px;background:#111;"></div>
<div class="r" style="left:118px;top:572px;width:419px;height:30px;background:#fff;"></div>
<div class="r" style="left:687px;top:572px;width:900px;height:30px;background:#fdfdf5;"></div>
<div class="r" style="left:1587px;top:572px;width:150px;height:30px;background:#fff;"></div>
<div class="r" style="left:386.4px;top:572px;width:1.6000000000000227px;height:30px;background:#111;"></div>
<div class="r" style="left:1586.4px;top:572px;width:1.599999999999909px;height:30px;background:#111;"></div>
<div class="r" style="left:1736.4px;top:572px;width:1.599999999999909px;height:30px;background:#111;"></div>
<div class="r" style="left:118px;top:662px;width:419px;height:30px;background:#fff;"></div>
<div class="r" style="left:687px;top:662px;width:900px;height:30px;background:#fdfdf5;"></div>
<div class="r" style="left:1587px;top:662px;width:150px;height:30px;background:#fff;"></div>
<div class="r" style="left:386.4px;top:662px;width:1.6000000000000227px;height:30px;background:#111;"></div>
<div class="r" style="left:1586.4px;top:662px;width:1.599999999999909px;height:30px;background:#111;"></div>
<div class="r" style="left:1736.4px;top:662px;width:1.599999999999909px;height:30px;background:#111;"></div>
<div class="r" style="left:118px;top:692px;width:419px;height:30px;background:#fff;"></div>
<div class="r" style="left:687px;top:692px;width:900px;height:30px;background:#fdfdf5;"></div>
<div class="r" style="left:1587px;top:692px;width:150px;height:30px;background:#fff;"></div>
<div class="r" style="left:386.4px;top:692px;width:1.6000000000000227px;height:30px;background:#111;"></div>
<div class="r" style="left:1586.4px;top:692px;width:1.599999999999909px;height:30px;background:#111;"></div>
<div class="r" style="left:1736.4px;top:692px;width:1.599999999999909px;height:30px;background:#111;"></div>
<div class="r" style="left:118px;top:842px;width:419px;height:30px;background:#fff;"></div>
<div class="r" style="left:687px;top:842px;width:900px;height:30px;background:#fdfdf5;"></div>
<div class="r" style="left:1587px;top:842px;width:150px;height:30px;background:#fff;"></div>
<div class="r" style="left:386.4px;top:842px;width:1.6000000000000227px;height:30px;background:#111;"></div>
<div class="r" style="left:1586.4px;top:842px;width:1.599999999999909px;height:30px;background:#111;"></div>
<div class="r" style="left:1736.4px;top:842px;width:1.599999999999909px;height:30px;background:#111;"></div>
<div class="r" style="left:118px;top:872px;width:419px;height:30px;background:#fff;"></div>
<div class="r" style="left:687px;top:872px;width:900px;height:30px;background:#fdfdf5;"></div>
<div class="r" style="left:1587px;top:872px;width:150px;height:30px;background:#fff;"></div>
<div class="r" style="left:386.4px;top:872px;width:1.6000000000000227px;height:30px;background:#111;"></div>
<div class="r" style="left:1586.4px;top:872px;width:1.599999999999909px;height:30px;background:#111;"></div>
<div class="r" style="left:1736.4px;top:872px;width:1.599999999999909px;height:30px;background:#111;"></div>
<div class="r" style="left:118px;top:962px;width:419px;height:30px;background:#fff;"></div>
<div class="r" style="left:687px;top:962px;width:900px;height:30px;background:#fdfdf5;"></div>
<div class="r" style="left:1587px;top:962px;width:150px;height:30px;background:#fff;"></div>
<div class="r" style="left:386.4px;top:962px;width:1.6000000000000227px;height:30px;background:#111;"></div>
<div class="r" style="left:1586.4px;top:962px;width:1.599999999999909px;height:30px;background:#111;"></div>
<div class="r" style="left:1736.4px;top:962px;width:1.599999999999909px;height:30px;background:#111;"></div>
<div class="r" style="left:118px;top:992px;width:419px;height:30px;background:#fff;"></div>
<div class="r" style="left:687px;top:992px;width:900px;height:30px;background:#fdfdf5;"></div>
<div class="r" style="left:1587px;top:992px;width:150px;height:30px;background:#fff;"></div>
<div class="r" style="left:386.4px;top:992px;width:1.6000000000000227px;height:30px;background:#111;"></div>
<div class="r" style="left:1586.4px;top:992px;width:1.599999999999909px;height:30px;background:#111;"></div>
<div class="r" style="left:1736.4px;top:992px;width:1.599999999999909px;height:30px;background:#111;"></div>
<div class="r" style="left:118px;top:1082px;width:419px;height:30px;background:#fff;"></div>
<div class="r" style="left:687px;top:1082px;width:900px;height:30px;background:#fdfdf5;"></div>
<div class="r" style="left:1587px;top:1082px;width:150px;height:30px;background:#fff;"></div>
<div class="r" style="left:386.4px;top:1082px;width:1.6000000000000227px;height:30px;background:#111;"></div>
<div class="r" style="left:1586.4px;top:1082px;width:1.599999999999909px;height:30px;background:#111;"></div>
<div class="r" style="left:1736.4px;top:1082px;width:1.599999999999909px;height:30px;background:#111;"></div>
<div class="r" style="left:118px;top:1112px;width:419px;height:30px;background:#fff;"></div>
<div class="r" style="left:687px;top:1112px;width:900px;height:30px;background:#fdfdf5;"></div>
<div class="r" style="left:1587px;top:1112px;width:150px;height:30px;background:#fff;"></div>
<div class="r" style="left:386.4px;top:1112px;width:1.6000000000000227px;height:30px;background:#111;"></div>
<div class="r" style="left:1586.4px;top:1112px;width:1.599999999999909px;height:30px;background:#111;"></div>
<div class="r" style="left:1736.4px;top:1112px;width:1.599999999999909px;height:30px;background:#111;"></div>
<div class="r" style="left:118px;top:452px;width:1619px;height:30px;background:#fff;"></div>
<div class="r" style="left:536px;top:302px;width:2px;height:870px;background:#a0a0a0;"></div>
<div class="r" style="left:118px;top:390.5px;width:2130px;height:2.0px;background:#a0a0a0;"></div>
<div class="t" style="left:119.20px;top:398px;font:normal 700 19px 'Liberation Sans', sans-serif;color:#000;">Belgium</div>
<div class="t" style="left:119.80px;top:428px;font:normal 700 19px 'Liberation Sans', sans-serif;color:#000;transform:scaleX(1.0207);">Tullow Oil</div>
<div class="t" style="left:131.90px;top:488px;font:normal 400 19px 'Liberation Sans', sans-serif;color:#000;transform:scaleX(1.0759);">App Marketing</div>
<div class="t" style="left:142.69px;top:518px;font:normal 700 19px 'Liberation Sans', sans-serif;color:#000;transform:scaleX(1.0060);">Revenue</div>
<div class="t" style="left:154.97px;top:548px;font:normal 400 19px 'Liberation Sans', sans-serif;color:#000;transform:scaleX(1.0293);">Revenue - Products</div>
<div class="t" style="left:154.99px;top:578px;font:normal 400 19px 'Liberation Sans', sans-serif;color:#000;transform:scaleX(1.0092);">Revenue - Services</div>
<div class="t" style="left:132.00px;top:608px;font:normal 400 19px 'Liberation Sans', sans-serif;color:#000;transform:scaleX(1.0523);">App Development</div>
<div class="t" style="left:142.69px;top:638px;font:normal 700 19px 'Liberation Sans', sans-serif;color:#000;transform:scaleX(1.0060);">Revenue</div>
<div class="t" style="left:154.97px;top:668px;font:normal 400 19px 'Liberation Sans', sans-serif;color:#000;transform:scaleX(1.0293);">Revenue - Products</div>
<div class="t" style="left:154.99px;top:698px;font:normal 400 19px 'Liberation Sans', sans-serif;color:#000;transform:scaleX(1.0092);">Revenue - Services</div>
<div class="t" style="left:131.90px;top:728px;font:normal 400 19px 'Liberation Sans', sans-serif;color:#000;transform:scaleX(1.0459);">Global Offerings</div>
<div class="t" style="left:143.70px;top:758px;font:normal 400 19px 'Liberation Sans', sans-serif;color:#000;transform:scaleX(1.0154);">Global Services</div>
<div class="t" style="left:156.00px;top:788px;font:normal 400 19px 'Liberation Sans', sans-serif;color:#000;transform:scaleX(1.0425);">Consulting</div>
<div class="t" style="left:166.90px;top:818px;font:normal 700 19px 'Liberation Sans', sans-serif;color:#000;transform:scaleX(1.0021);">Revenue</div>
<div class="t" style="left:178.97px;top:848px;font:normal 400 19px 'Liberation Sans', sans-serif;color:#000;transform:scaleX(1.0287);">Revenue - Products</div>
<div class="t" style="left:178.99px;top:878px;font:normal 400 19px 'Liberation Sans', sans-serif;color:#000;transform:scaleX(1.0061);">Revenue - Services</div>
<div class="t" style="left:154.89px;top:908px;font:normal 400 19px 'Liberation Sans', sans-serif;color:#000;transform:scaleX(1.1057);">Implementation</div>
<div class="t" style="left:166.90px;top:938px;font:normal 700 19px 'Liberation Sans', sans-serif;color:#000;transform:scaleX(1.0021);">Revenue</div>
<div class="t" style="left:178.97px;top:968px;font:normal 400 19px 'Liberation Sans', sans-serif;color:#000;transform:scaleX(1.0287);">Revenue - Products</div>
<div class="t" style="left:178.99px;top:998px;font:normal 400 19px 'Liberation Sans', sans-serif;color:#000;transform:scaleX(1.0061);">Revenue - Services</div>
<div class="t" style="left:156.00px;top:1028px;font:normal 400 19px 'Liberation Sans', sans-serif;color:#000;transform:scaleX(1.0391);">Support</div>
<div class="t" style="left:166.90px;top:1058px;font:normal 700 19px 'Liberation Sans', sans-serif;color:#000;transform:scaleX(1.0021);">Revenue</div>
<div class="t" style="left:178.97px;top:1088px;font:normal 400 19px 'Liberation Sans', sans-serif;color:#000;transform:scaleX(1.0287);">Revenue - Products</div>
<div class="t" style="left:178.99px;top:1118px;font:normal 400 19px 'Liberation Sans', sans-serif;color:#000;transform:scaleX(1.0061);">Revenue - Services</div>
<div class="t" style="left:143.70px;top:1148px;font:normal 400 19px 'Liberation Sans', sans-serif;color:#000;transform:scaleX(0.9773);">Global SaaS</div>
<div class="r" style="left:121px;top:465.6px;width:10px;height:10px;border-radius:50%;background:#cdcdcd"></div>
<div style="position:absolute;left:118px;top:452px;width:418px;height:30px;overflow:hidden"><div style="position:absolute;left:-118px;top:-452px"><div class="t" style="left:138.30px;top:459px;font:italic 700 19px 'Liberation Sans', sans-serif;color:#000;transform:scaleX(1.0319);">Opportunity 2 (Close Date:08/13/2024, Cont</div></div></div>
<div class="t" style="left:437.50px;top:518px;font:normal 700 19px 'Liberation Sans', sans-serif;color:#000;transform:scaleX(1.0600);">$3,750.00</div>
<div class="t" style="left:754.90px;top:518px;font:normal 700 19px 'Liberation Sans', sans-serif;color:#000;transform:scaleX(1.0512);">$625.00</div>
<div class="t" style="left:904.90px;top:518px;font:normal 700 19px 'Liberation Sans', sans-serif;color:#000;transform:scaleX(1.0512);">$625.00</div>
<div class="t" style="left:1054.90px;top:518px;font:normal 700 19px 'Liberation Sans', sans-serif;color:#000;transform:scaleX(1.0512);">$625.00</div>
<div class="t" style="left:1204.90px;top:518px;font:normal 700 19px 'Liberation Sans', sans-serif;color:#000;transform:scaleX(1.0512);">$625.00</div>
<div class="t" style="left:1354.90px;top:518px;font:normal 700 19px 'Liberation Sans', sans-serif;color:#000;transform:scaleX(1.0512);">$625.00</div>
<div class="t" style="left:1504.90px;top:518px;font:normal 700 19px 'Liberation Sans', sans-serif;color:#000;transform:scaleX(1.0512);">$625.00</div>
<div class="t" style="left:1637.60px;top:518px;font:normal 700 19px 'Liberation Sans', sans-serif;color:#000;transform:scaleX(1.0565);">$3,750.00</div>
<div class="t" style="left:437.50px;top:638px;font:normal 700 19px 'Liberation Sans', sans-serif;color:#000;transform:scaleX(1.0600);">$3,750.00</div>
<div class="t" style="left:754.90px;top:638px;font:normal 700 19px 'Liberation Sans', sans-serif;color:#000;transform:scaleX(1.0512);">$625.00</div>
<div class="t" style="left:904.90px;top:638px;font:normal 700 19px 'Liberation Sans', sans-serif;color:#000;transform:scaleX(1.0512);">$625.00</div>
<div class="t" style="left:1054.90px;top:638px;font:normal 700 19px 'Liberation Sans', sans-serif;color:#000;transform:scaleX(1.0512);">$625.00</div>
<div class="t" style="left:1204.90px;top:638px;font:normal 700 19px 'Liberation Sans', sans-serif;color:#000;transform:scaleX(1.0512);">$625.00</div>
<div class="t" style="left:1354.90px;top:638px;font:normal 700 19px 'Liberation Sans', sans-serif;color:#000;transform:scaleX(1.0512);">$625.00</div>
<div class="t" style="left:1504.90px;top:638px;font:normal 700 19px 'Liberation Sans', sans-serif;color:#000;transform:scaleX(1.0512);">$625.00</div>
<div class="t" style="left:1637.60px;top:638px;font:normal 700 19px 'Liberation Sans', sans-serif;color:#000;transform:scaleX(1.0565);">$3,750.00</div>
<div class="t" style="left:500.40px;top:548px;font:normal 400 19px 'Liberation Sans', sans-serif;color:#000;">-</div>
<div class="t" style="left:800.40px;top:548px;font:normal 400 19px 'Liberation Sans', sans-serif;color:#00008b;transform:scaleX(0.9333);">-</div>
<div class="t" style="left:950.40px;top:548px;font:normal 400 19px 'Liberation Sans', sans-serif;color:#00008b;transform:scaleX(0.9333);">-</div>
<div class="t" style="left:1100.40px;top:548px;font:normal 400 19px 'Liberation Sans', sans-serif;color:#00008b;transform:scaleX(0.9333);">-</div>
<div class="t" style="left:1250.40px;top:548px;font:normal 400 19px 'Liberation Sans', sans-serif;color:#00008b;transform:scaleX(0.9333);">-</div>
<div class="t" style="left:1400.40px;top:548px;font:normal 400 19px 'Liberation Sans', sans-serif;color:#00008b;transform:scaleX(0.9333);">-</div>
<div class="t" style="left:1550.40px;top:548px;font:normal 400 19px 'Liberation Sans', sans-serif;color:#00008b;transform:scaleX(0.9333);">-</div>
<div class="t" style="left:1700.00px;top:548px;font:normal 400 19px 'Liberation Sans', sans-serif;color:#000;">-</div>
<div class="t" style="left:500.40px;top:668px;font:normal 400 19px 'Liberation Sans', sans-serif;color:#000;">-</div>
<div class="t" style="left:800.40px;top:668px;font:normal 400 19px 'Liberation Sans', sans-serif;color:#00008b;transform:scaleX(0.9333);">-</div>
<div class="t" style="left:950.40px;top:668px;font:normal 400 19px 'Liberation Sans', sans-serif;color:#00008b;transform:scaleX(0.9333);">-</div>
<div class="t" style="left:1100.40px;top:668px;font:normal 400 19px 'Liberation Sans', sans-serif;color:#00008b;transform:scaleX(0.9333);">-</div>
<div class="t" style="left:1250.40px;top:668px;font:normal 400 19px 'Liberation Sans', sans-serif;color:#00008b;transform:scaleX(0.9333);">-</div>
<div class="t" style="left:1400.40px;top:668px;font:normal 400 19px 'Liberation Sans', sans-serif;color:#00008b;transform:scaleX(0.9333);">-</div>
<div class="t" style="left:1550.40px;top:668px;font:normal 400 19px 'Liberation Sans', sans-serif;color:#00008b;transform:scaleX(0.9333);">-</div>
<div class="t" style="left:1700.00px;top:668px;font:normal 400 19px 'Liberation Sans', sans-serif;color:#000;">-</div>
<div class="t" style="left:438.00px;top:578px;font:normal 400 19px 'Liberation Sans', sans-serif;color:#000;transform:scaleX(1.0541);">$3,750.00</div>
<div class="t" style="left:754.50px;top:578px;font:normal 400 19px 'Liberation Sans', sans-serif;color:#00008b;transform:scaleX(1.0571);">$625.00</div>
<div class="t" style="left:904.50px;top:578px;font:normal 400 19px 'Liberation Sans', sans-serif;color:#00008b;transform:scaleX(1.0571);">$625.00</div>
<div class="t" style="left:1054.50px;top:578px;font:normal 400 19px 'Liberation Sans', sans-serif;color:#00008b;transform:scaleX(1.0571);">$625.00</div>
<div class="t" style="left:1204.50px;top:578px;font:normal 400 19px 'Liberation Sans', sans-serif;color:#00008b;transform:scaleX(1.0571);">$625.00</div>
<div class="t" style="left:1354.50px;top:578px;font:normal 400 19px 'Liberation Sans', sans-serif;color:#00008b;transform:scaleX(1.0571);">$625.00</div>
<div class="t" style="left:1504.50px;top:578px;font:normal 400 19px 'Liberation Sans', sans-serif;color:#00008b;transform:scaleX(1.0571);">$625.00</div>
<div class="t" style="left:1638.00px;top:578px;font:normal 400 19px 'Liberation Sans', sans-serif;color:#000;transform:scaleX(1.0517);">$3,750.00</div>
<div class="t" style="left:438.00px;top:698px;font:normal 400 19px 'Liberation Sans', sans-serif;color:#000;transform:scaleX(1.0541);">$3,750.00</div>
<div class="t" style="left:754.50px;top:698px;font:normal 400 19px 'Liberation Sans', sans-serif;color:#00008b;transform:scaleX(1.0571);">$625.00</div>
<div class="t" style="left:904.50px;top:698px;font:normal 400 19px 'Liberation Sans', sans-serif;color:#00008b;transform:scaleX(1.0571);">$625.00</div>
<div class="t" style="left:1054.50px;top:698px;font:normal 400 19px 'Liberation Sans', sans-serif;color:#00008b;transform:scaleX(1.0571);">$625.00</div>
<div class="t" style="left:1204.50px;top:698px;font:normal 400 19px 'Liberation Sans', sans-serif;color:#00008b;transform:scaleX(1.0571);">$625.00</div>
<div class="t" style="left:1354.50px;top:698px;font:normal 400 19px 'Liberation Sans', sans-serif;color:#00008b;transform:scaleX(1.0571);">$625.00</div>
<div class="t" style="left:1504.50px;top:698px;font:normal 400 19px 'Liberation Sans', sans-serif;color:#00008b;transform:scaleX(1.0571);">$625.00</div>
<div class="t" style="left:1638.00px;top:698px;font:normal 400 19px 'Liberation Sans', sans-serif;color:#000;transform:scaleX(1.0517);">$3,750.00</div>
<div class="t" style="left:499.50px;top:818px;font:normal 700 19px 'Liberation Sans', sans-serif;color:#000;transform:scaleX(1.1333);">-</div>
<div class="t" style="left:799.50px;top:818px;font:normal 700 19px 'Liberation Sans', sans-serif;color:#000;transform:scaleX(1.1333);">-</div>
<div class="t" style="left:949.50px;top:818px;font:normal 700 19px 'Liberation Sans', sans-serif;color:#000;transform:scaleX(1.1333);">-</div>
<div class="t" style="left:1099.50px;top:818px;font:normal 700 19px 'Liberation Sans', sans-serif;color:#000;transform:scaleX(1.1333);">-</div>
<div class="t" style="left:1249.50px;top:818px;font:normal 700 19px 'Liberation Sans', sans-serif;color:#000;transform:scaleX(1.1333);">-</div>
<div class="t" style="left:1399.50px;top:818px;font:normal 700 19px 'Liberation Sans', sans-serif;color:#000;transform:scaleX(1.1333);">-</div>
<div class="t" style="left:1549.50px;top:818px;font:normal 700 19px 'Liberation Sans', sans-serif;color:#000;transform:scaleX(1.1333);">-</div>
<div class="t" style="left:1699.50px;top:818px;font:normal 700 19px 'Liberation Sans', sans-serif;color:#000;transform:scaleX(1.1333);">-</div>
<div class="t" style="left:499.50px;top:938px;font:normal 700 19px 'Liberation Sans', sans-serif;color:#000;transform:scaleX(1.1333);">-</div>
<div class="t" style="left:799.50px;top:938px;font:normal 700 19px 'Liberation Sans', sans-serif;color:#000;transform:scaleX(1.1333);">-</div>
<div class="t" style="left:949.50px;top:938px;font:normal 700 19px 'Liberation Sans', sans-serif;color:#000;transform:scaleX(1.1333);">-</div>
<div class="t" style="left:1099.50px;top:938px;font:normal 700 19px 'Liberation Sans', sans-serif;color:#000;transform:scaleX(1.1333);">-</div>
<div class="t" style="left:1249.50px;top:938px;font:normal 700 19px 'Liberation Sans', sans-serif;color:#000;transform:scaleX(1.1333);">-</div>
<div class="t" style="left:1399.50px;top:938px;font:normal 700 19px 'Liberation Sans', sans-serif;color:#000;transform:scaleX(1.1333);">-</div>
<div class="t" style="left:1549.50px;top:938px;font:normal 700 19px 'Liberation Sans', sans-serif;color:#000;transform:scaleX(1.1333);">-</div>
<div class="t" style="left:1699.50px;top:938px;font:normal 700 19px 'Liberation Sans', sans-serif;color:#000;transform:scaleX(1.1333);">-</div>
<div class="t" style="left:499.50px;top:1058px;font:normal 700 19px 'Liberation Sans', sans-serif;color:#000;transform:scaleX(1.1333);">-</div>
<div class="t" style="left:799.50px;top:1058px;font:normal 700 19px 'Liberation Sans', sans-serif;color:#000;transform:scaleX(1.1333);">-</div>
<div class="t" style="left:949.50px;top:1058px;font:normal 700 19px 'Liberation Sans', sans-serif;color:#000;transform:scaleX(1.1333);">-</div>
<div class="t" style="left:1099.50px;top:1058px;font:normal 700 19px 'Liberation Sans', sans-serif;color:#000;transform:scaleX(1.1333);">-</div>
<div class="t" style="left:1249.50px;top:1058px;font:normal 700 19px 'Liberation Sans', sans-serif;color:#000;transform:scaleX(1.1333);">-</div>
<div class="t" style="left:1399.50px;top:1058px;font:normal 700 19px 'Liberation Sans', sans-serif;color:#000;transform:scaleX(1.1333);">-</div>
<div class="t" style="left:1549.50px;top:1058px;font:normal 700 19px 'Liberation Sans', sans-serif;color:#000;transform:scaleX(1.1333);">-</div>
<div class="t" style="left:1699.50px;top:1058px;font:normal 700 19px 'Liberation Sans', sans-serif;color:#000;transform:scaleX(1.1333);">-</div>
<div class="t" style="left:500.40px;top:848px;font:normal 400 19px 'Liberation Sans', sans-serif;color:#000;">-</div>
<div class="t" style="left:800.40px;top:848px;font:normal 400 19px 'Liberation Sans', sans-serif;color:#00008b;transform:scaleX(0.9333);">-</div>
<div class="t" style="left:950.40px;top:848px;font:normal 400 19px 'Liberation Sans', sans-serif;color:#00008b;transform:scaleX(0.9333);">-</div>
<div class="t" style="left:1100.40px;top:848px;font:normal 400 19px 'Liberation Sans', sans-serif;color:#00008b;transform:scaleX(0.9333);">-</div>
<div class="t" style="left:1250.40px;top:848px;font:normal 400 19px 'Liberation Sans', sans-serif;color:#00008b;transform:scaleX(0.9333);">-</div>
<div class="t" style="left:1400.40px;top:848px;font:normal 400 19px 'Liberation Sans', sans-serif;color:#00008b;transform:scaleX(0.9333);">-</div>
<div class="t" style="left:1550.40px;top:848px;font:normal 400 19px 'Liberation Sans', sans-serif;color:#00008b;transform:scaleX(0.9333);">-</div>
<div class="t" style="left:1700.00px;top:848px;font:normal 400 19px 'Liberation Sans', sans-serif;color:#000;">-</div>
<div class="t" style="left:500.40px;top:878px;font:normal 400 19px 'Liberation Sans', sans-serif;color:#000;">-</div>
<div class="t" style="left:800.40px;top:878px;font:normal 400 19px 'Liberation Sans', sans-serif;color:#00008b;transform:scaleX(0.9333);">-</div>
<div class="t" style="left:950.40px;top:878px;font:normal 400 19px 'Liberation Sans', sans-serif;color:#00008b;transform:scaleX(0.9333);">-</div>
<div class="t" style="left:1100.40px;top:878px;font:normal 400 19px 'Liberation Sans', sans-serif;color:#00008b;transform:scaleX(0.9333);">-</div>
<div class="t" style="left:1250.40px;top:878px;font:normal 400 19px 'Liberation Sans', sans-serif;color:#00008b;transform:scaleX(0.9333);">-</div>
<div class="t" style="left:1400.40px;top:878px;font:normal 400 19px 'Liberation Sans', sans-serif;color:#00008b;transform:scaleX(0.9333);">-</div>
<div class="t" style="left:1550.40px;top:878px;font:normal 400 19px 'Liberation Sans', sans-serif;color:#00008b;transform:scaleX(0.9333);">-</div>
<div class="t" style="left:1700.00px;top:878px;font:normal 400 19px 'Liberation Sans', sans-serif;color:#000;">-</div>
<div class="t" style="left:500.40px;top:968px;font:normal 400 19px 'Liberation Sans', sans-serif;color:#000;">-</div>
<div class="t" style="left:800.40px;top:968px;font:normal 400 19px 'Liberation Sans', sans-serif;color:#00008b;transform:scaleX(0.9333);">-</div>
<div class="t" style="left:950.40px;top:968px;font:normal 400 19px 'Liberation Sans', sans-serif;color:#00008b;transform:scaleX(0.9333);">-</div>
<div class="t" style="left:1100.40px;top:968px;font:normal 400 19px 'Liberation Sans', sans-serif;color:#00008b;transform:scaleX(0.9333);">-</div>
<div class="t" style="left:1250.40px;top:968px;font:normal 400 19px 'Liberation Sans', sans-serif;color:#00008b;transform:scaleX(0.9333);">-</div>
<div class="t" style="left:1400.40px;top:968px;font:normal 400 19px 'Liberation Sans', sans-serif;color:#00008b;transform:scaleX(0.9333);">-</div>
<div class="t" style="left:1550.40px;top:968px;font:normal 400 19px 'Liberation Sans', sans-serif;color:#00008b;transform:scaleX(0.9333);">-</div>
<div class="t" style="left:1700.00px;top:968px;font:normal 400 19px 'Liberation Sans', sans-serif;color:#000;">-</div>
<div class="t" style="left:500.40px;top:998px;font:normal 400 19px 'Liberation Sans', sans-serif;color:#000;">-</div>
<div class="t" style="left:800.40px;top:998px;font:normal 400 19px 'Liberation Sans', sans-serif;color:#00008b;transform:scaleX(0.9333);">-</div>
<div class="t" style="left:950.40px;top:998px;font:normal 400 19px 'Liberation Sans', sans-serif;color:#00008b;transform:scaleX(0.9333);">-</div>
<div class="t" style="left:1100.40px;top:998px;font:normal 400 19px 'Liberation Sans', sans-serif;color:#00008b;transform:scaleX(0.9333);">-</div>
<div class="t" style="left:1250.40px;top:998px;font:normal 400 19px 'Liberation Sans', sans-serif;color:#00008b;transform:scaleX(0.9333);">-</div>
<div class="t" style="left:1400.40px;top:998px;font:normal 400 19px 'Liberation Sans', sans-serif;color:#00008b;transform:scaleX(0.9333);">-</div>
<div class="t" style="left:1550.40px;top:998px;font:normal 400 19px 'Liberation Sans', sans-serif;color:#00008b;transform:scaleX(0.9333);">-</div>
<div class="t" style="left:1700.00px;top:998px;font:normal 400 19px 'Liberation Sans', sans-serif;color:#000;">-</div>
<div class="t" style="left:500.40px;top:1088px;font:normal 400 19px 'Liberation Sans', sans-serif;color:#000;">-</div>
<div class="t" style="left:800.40px;top:1088px;font:normal 400 19px 'Liberation Sans', sans-serif;color:#00008b;transform:scaleX(0.9333);">-</div>
<div class="t" style="left:950.40px;top:1088px;font:normal 400 19px 'Liberation Sans', sans-serif;color:#00008b;transform:scaleX(0.9333);">-</div>
<div class="t" style="left:1100.40px;top:1088px;font:normal 400 19px 'Liberation Sans', sans-serif;color:#00008b;transform:scaleX(0.9333);">-</div>
<div class="t" style="left:1250.40px;top:1088px;font:normal 400 19px 'Liberation Sans', sans-serif;color:#00008b;transform:scaleX(0.9333);">-</div>
<div class="t" style="left:1400.40px;top:1088px;font:normal 400 19px 'Liberation Sans', sans-serif;color:#00008b;transform:scaleX(0.9333);">-</div>
<div class="t" style="left:1550.40px;top:1088px;font:normal 400 19px 'Liberation Sans', sans-serif;color:#00008b;transform:scaleX(0.9333);">-</div>
<div class="t" style="left:1700.00px;top:1088px;font:normal 400 19px 'Liberation Sans', sans-serif;color:#000;">-</div>
<div class="t" style="left:500.40px;top:1118px;font:normal 400 19px 'Liberation Sans', sans-serif;color:#000;">-</div>
<div class="t" style="left:800.40px;top:1118px;font:normal 400 19px 'Liberation Sans', sans-serif;color:#00008b;transform:scaleX(0.9333);">-</div>
<div class="t" style="left:950.40px;top:1118px;font:normal 400 19px 'Liberation Sans', sans-serif;color:#00008b;transform:scaleX(0.9333);">-</div>
<div class="t" style="left:1100.40px;top:1118px;font:normal 400 19px 'Liberation Sans', sans-serif;color:#00008b;transform:scaleX(0.9333);">-</div>
<div class="t" style="left:1250.40px;top:1118px;font:normal 400 19px 'Liberation Sans', sans-serif;color:#00008b;transform:scaleX(0.9333);">-</div>
<div class="t" style="left:1400.40px;top:1118px;font:normal 400 19px 'Liberation Sans', sans-serif;color:#00008b;transform:scaleX(0.9333);">-</div>
<div class="t" style="left:1550.40px;top:1118px;font:normal 400 19px 'Liberation Sans', sans-serif;color:#00008b;transform:scaleX(0.9333);">-</div>
<div class="t" style="left:1700.00px;top:1118px;font:normal 400 19px 'Liberation Sans', sans-serif;color:#000;">-</div>
<div class="r" style="left:4.5px;top:514px;width:26.5px;height:27px;border:1.6px solid #7f8794;box-sizing:border-box"></div>
<div class="r" style="left:11.0px;top:526.3px;width:13.5px;height:2.400000000000091px;background:#a6a6a6;"></div>
<div class="r" style="left:16.2px;top:541px;width:2.6000000000000014px;height:60px;background:#a6a6a6;"></div>
<div class="r" style="left:16.2px;top:598.5px;width:8.8px;height:2.5px;background:#a6a6a6;"></div>
<div class="r" style="left:4.5px;top:634px;width:26.5px;height:27px;border:1.6px solid #7f8794;box-sizing:border-box"></div>
<div class="r" style="left:11.0px;top:646.3px;width:13.5px;height:2.400000000000091px;background:#a6a6a6;"></div>
<div class="r" style="left:16.2px;top:661px;width:2.6000000000000014px;height:60px;background:#a6a6a6;"></div>
<div class="r" style="left:16.2px;top:718.5px;width:8.8px;height:2.5px;background:#a6a6a6;"></div>
<div class="r" style="left:4.5px;top:814px;width:26.5px;height:27px;border:1.6px solid #7f8794;box-sizing:border-box"></div>
<div class="r" style="left:11.0px;top:826.3px;width:13.5px;height:2.400000000000091px;background:#a6a6a6;"></div>
<div class="r" style="left:16.2px;top:841px;width:2.6000000000000014px;height:60px;background:#a6a6a6;"></div>
<div class="r" style="left:16.2px;top:898.5px;width:8.8px;height:2.5px;background:#a6a6a6;"></div>
<div class="r" style="left:4.5px;top:934px;width:26.5px;height:27px;border:1.6px solid #7f8794;box-sizing:border-box"></div>
<div class="r" style="left:11.0px;top:946.3px;width:13.5px;height:2.400000000000091px;background:#a6a6a6;"></div>
<div class="r" style="left:16.2px;top:961px;width:2.6000000000000014px;height:60px;background:#a6a6a6;"></div>
<div class="r" style="left:16.2px;top:1018.5px;width:8.8px;height:2.5px;background:#a6a6a6;"></div>
<div class="r" style="left:4.5px;top:1054px;width:26.5px;height:27px;border:1.6px solid #7f8794;box-sizing:border-box"></div>
<div class="r" style="left:11.0px;top:1066.3px;width:13.5px;height:2.400000000000091px;background:#a6a6a6;"></div>
<div class="r" style="left:16.2px;top:1081px;width:2.6000000000000014px;height:60px;background:#a6a6a6;"></div>
<div class="r" style="left:16.2px;top:1138.5px;width:8.8px;height:2.5px;background:#a6a6a6;"></div>
<div class="r" style="left:41.5px;top:556px;width:3.0px;height:3px;background:#a6a6a6;"></div>
<div class="r" style="left:41.5px;top:586px;width:3.0px;height:3px;background:#a6a6a6;"></div>
<div class="r" style="left:41.5px;top:676px;width:3.0px;height:3px;background:#a6a6a6;"></div>
<div class="r" style="left:41.5px;top:706px;width:3.0px;height:3px;background:#a6a6a6;"></div>
<div class="r" style="left:41.5px;top:856px;width:3.0px;height:3px;background:#a6a6a6;"></div>
<div class="r" style="left:41.5px;top:886px;width:3.0px;height:3px;background:#a6a6a6;"></div>
<div class="r" style="left:41.5px;top:976px;width:3.0px;height:3px;background:#a6a6a6;"></div>
<div class="r" style="left:41.5px;top:1006px;width:3.0px;height:3px;background:#a6a6a6;"></div>
<div class="r" style="left:41.5px;top:1096px;width:3.0px;height:3px;background:#a6a6a6;"></div>
<div class="r" style="left:41.5px;top:1126px;width:3.0px;height:3px;background:#a6a6a6;"></div>
<div class="r" style="left:1px;top:1171px;width:2247px;height:1.599999999999909px;background:#b0b0b0;"></div>
<div class="r" style="left:1px;top:1172px;width:2247px;height:41px;background:#f0f0f0;"></div>
<svg style="left:38px;top:1185px" width="12" height="14"><polygon points="8,1.5 8,12.5 2,7" fill="#b0b0b0"/></svg>
<svg style="left:80px;top:1185px" width="12" height="14"><polygon points="3,1.5 3,12.5 9,7" fill="#b0b0b0"/></svg>
<div class="r" style="left:150px;top:1171px;width:79px;height:37px;background:#fff;border:1px solid #c8c8c8;border-top:none;box-sizing:border-box"></div>
<div class="r" style="left:150px;top:1205.5px;width:78.5px;height:3.0px;background:#217346;"></div>
<div class="t" style="left:169.02px;top:1178px;font:normal 700 20px 'Liberation Sans', sans-serif;color:#217346;transform:scaleX(0.9795);">Plan</div>
<svg style="left:277px;top:1178px" width="28" height="28"><circle cx="13.8" cy="14" r="10.6" fill="none" stroke="#6a6a6a" stroke-width="2"/><rect x="8" y="12.6" width="11.6" height="2.8" fill="#6a6a6a"/><rect x="12.4" y="8.2" width="2.8" height="11.6" fill="#6a6a6a"/></svg>
<div class="r" style="left:1px;top:1213px;width:2247px;height:38px;background:#217346;"></div>
<div class="t" style="left:15.78px;top:1224px;font:normal 400 16px 'Liberation Sans', sans-serif;color:#f4f4f4;transform:scaleX(0.9215);">Ready</div>
<div class="r" style="left:1935.7px;top:1232.2px;width:18.299999999999955px;height:2.2000000000000455px;background:#e8e8e8;"></div>
<div class="r" style="left:1962.5px;top:1232.8px;width:180.30000000000018px;height:1.0px;background:#d8d8d8;"></div>
<div class="r" style="left:2049.6px;top:1225px;width:6.700000000000273px;height:15px;background:#f2f2f2;"></div>
<div class="r" style="left:2151.8px;top:1231.3px;width:18.399999999999636px;height:2.2000000000000455px;background:#f2f2f2;"></div>
<div class="r" style="left:2159.9px;top:1223.3px;width:2.199999999999818px;height:18.100000000000136px;background:#f2f2f2;"></div>
<div class="t" style="left:2187.09px;top:1223px;font:normal 400 17px 'Liberation Sans', sans-serif;color:#f4f4f4;transform:scaleX(0.9088);">100%</div>
<div class="r" style="left:685px;top:689.5px;width:154px;height:34.5px;border:3px solid #1e7145;box-sizing:border-box"></div>
<div class="r" style="left:813px;top:705px;width:281px;height:168px;background:#fff;border:1px solid #cfcfcf;box-sizing:border-box;box-shadow:2px 3px 6px rgba(0,0,0,0.32)"></div>
<div class="r" style="left:845px;top:748px;width:240px;height:1.5px;background:#e3e3e3;"></div>
<svg style="left:812px;top:704px" width="60" height="170"><defs><linearGradient id="gb" x1="0" x2="1" y1="0" y2="0"><stop offset="0" stop-color="#7fb6ee"/><stop offset="1" stop-color="#a9d0f5"/></linearGradient><linearGradient id="gy" x1="0" x2="1" y1="0" y2="1"><stop offset="0" stop-color="#fffbd8"/><stop offset="0.6" stop-color="#f1e7a0"/><stop offset="1" stop-color="#cdbf62"/></linearGradient><linearGradient id="gp" x1="0" x2="1" y1="0" y2="1"><stop offset="0" stop-color="#ffffff"/><stop offset="1" stop-color="#c9daf3"/></linearGradient></defs><path d="M10.4 33 L10.4 17 C 10.4 15, 12 14.3, 15 14 L15 33 Z" fill="url(#gb)"/><path d="M16.3 16.3 L16.3 14.3 C 16.3 13.5, 17 13.3, 20.5 13.3 L21 9.5 C 21 9, 21.5 9, 22 9 L27.5 9 C 28 9, 28.5 9, 28.5 9.5 L29 13.3 C 32 13.3, 32.7 13.5, 32.7 14.3 L32.7 16.3 Z M23 11 L23 13.3 L26.8 13.3 L26.8 11 Z" fill="#6f6f6f" fill-rule="evenodd"/><text x="17" y="30.6" font-family="Liberation Sans" font-weight="700" font-size="13.5" fill="#858585">%</text><path d="M11.5 57 L30.5 57 C 31.8 57, 32.6 57.8, 32.6 59 L32.6 73.8 L11.2 73.8 C 10.6 73.8, 10.4 73.4, 10.4 72.8 L10.4 58 C 10.4 57.4, 10.8 57, 11.5 57 Z" fill="url(#gy)"/><path d="M32.6 59 L32.6 73.8 L11 73.8 L11 72 L30.8 72 L30.8 59 Z" fill="#6d5f1e"/><path d="M27 70.5 L30 67.5 L30 70.5 Z" fill="#8a7a2a"/><g stroke="#ff8a1c" stroke-width="1.3" stroke-linecap="round"><line x1="14.1" y1="52.5" x2="14.1" y2="63.5"/><line x1="8.6" y1="58" x2="19.6" y2="58"/><line x1="10.2" y1="54.1" x2="18" y2="61.9"/><line x1="18" y1="54.1" x2="10.2" y2="61.9"/></g><circle cx="14.1" cy="58" r="2.8" fill="#ffe600"/><path d="M9.5 94.5 L16.5 94.5 L19.5 97.5 L19.5 112.3 L9.5 112.3 Z" fill="url(#gp)" stroke="#47699f" stroke-width="1"/><path d="M18.5 97 L27.5 97 L31.3 100.8 L31.3 114.8 L18.5 114.8 Z" fill="url(#gp)" stroke="#2f5aa8" stroke-width="1.1"/><path d="M11.5 140 L30.5 140 C 31.8 140, 32.6 140.8, 32.6 142 L32.6 157.8 L11.2 157.8 C 10.6 157.8, 10.4 157.4, 10.4 156.8 L10.4 141 C 10.4 140.4, 10.8 140, 11.5 140 Z" fill="url(#gy)"/><path d="M32.6 142 L32.6 157.8 L11 157.8 L11 156 L30.8 156 L30.8 142 Z" fill="#6d5f1e"/><path d="M27 154.5 L30 151.5 L30 154.5 Z" fill="#8a7a2a"/><path d="M9.5 135.5 L19 144.5" stroke="#e3262b" stroke-width="2.6" stroke-linecap="round"/><path d="M21 136 C 17 139, 13.5 142, 10.8 146.5" stroke="#d81f26" stroke-width="2.8" stroke-linecap="round" fill="none"/></svg>
<div class="t" style="left:862.50px;top:716px;font:normal 400 20px 'Liberation Sans', sans-serif;color:#444;transform:scaleX(0.9046);">Values&amp;Formatting</div>
<div class="t" style="left:861.61px;top:759px;font:normal 400 20px 'Liberation Sans', sans-serif;color:#444;transform:scaleX(0.8935);">Comments</div>
<div class="t" style="left:862.50px;top:800px;font:normal 400 20px 'Liberation Sans', sans-serif;color:#444;transform:scaleX(0.9023);">Approve</div>
<div class="t" style="left:861.65px;top:841px;font:normal 400 20px 'Liberation Sans', sans-serif;color:#444;transform:scaleX(0.8462);">Reject</div>
<svg style="left:0px;top:0px" width="2256" height="1302"><polygon points="1103.8,876.1 1139.9,880.1 1125.7,904.5" fill="#ff00dc"/><line x1="1130" y1="891" x2="1220.6" y2="943" stroke="#ff00dc" stroke-width="8.5" stroke-linecap="round"/></svg>
</body></html>
